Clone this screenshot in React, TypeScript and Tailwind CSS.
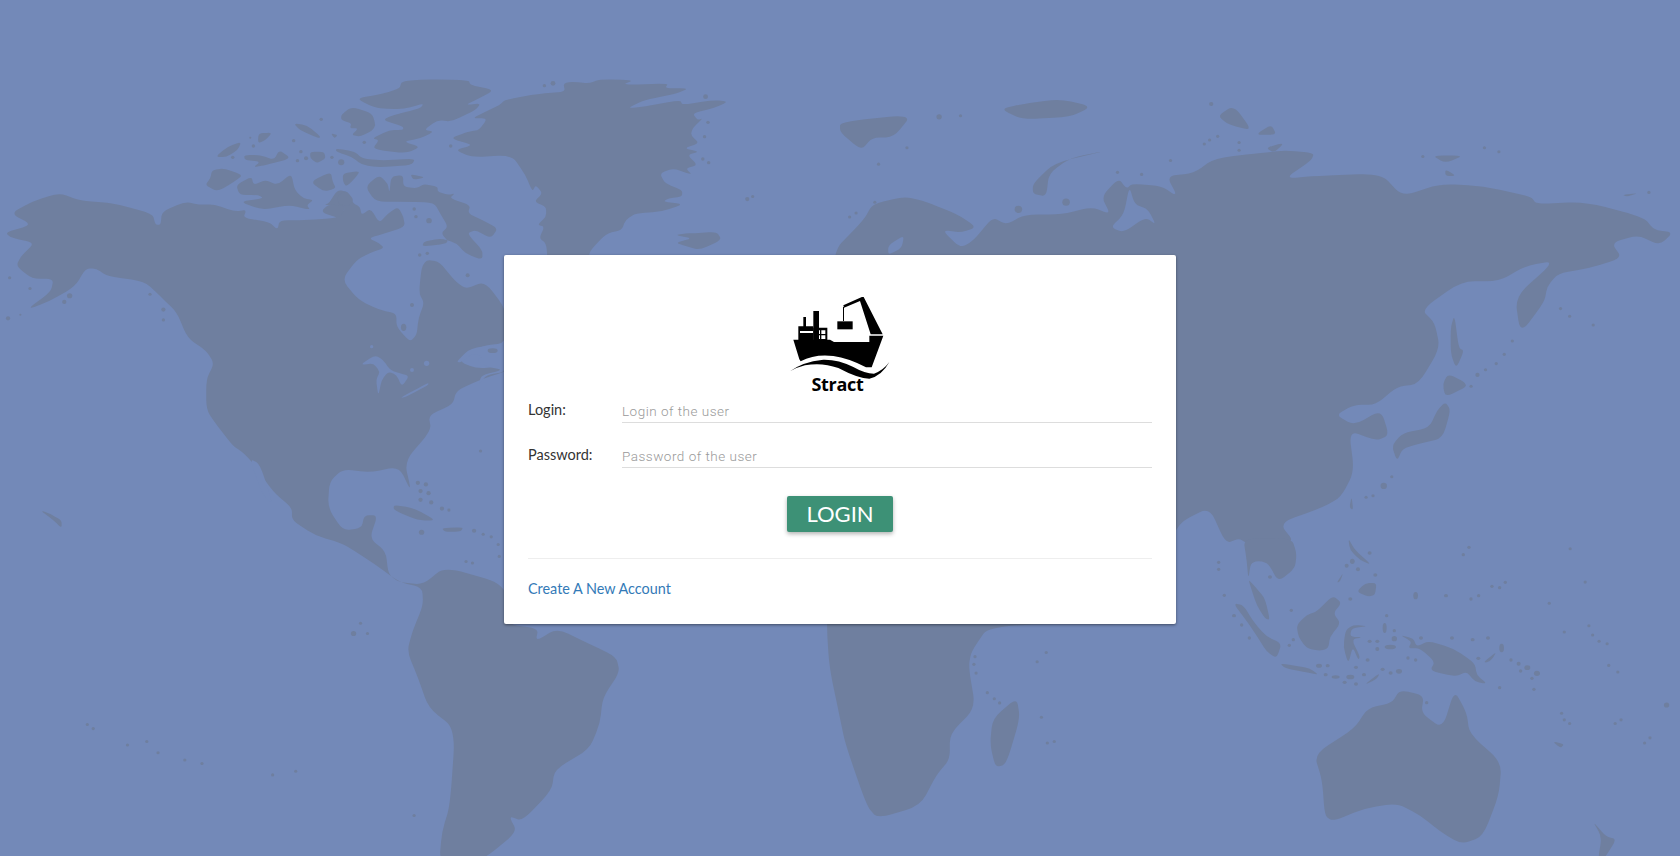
import React from 'react';

// rounds the corners of a traced outline
const smooth = (d: string) => {
  const n = (d.match(/-?\d+(\.\d+)?/g) || []).map(Number);
  const p: [number, number][] = [];
  for (let i = 0; i < n.length; i += 2) p.push([n[i], n[i + 1]]);
  const t = 0.35;
  let out = '';
  p.forEach((c, i) => {
    const a = p[(i - 1 + p.length) % p.length];
    const b = p[(i + 1) % p.length];
    const s = [c[0] + (a[0] - c[0]) * t, c[1] + (a[1] - c[1]) * t];
    const e = [c[0] + (b[0] - c[0]) * t, c[1] + (b[1] - c[1]) * t];
    out += `${i === 0 ? 'M' : 'L'}${s[0]} ${s[1]} Q${c[0]} ${c[1]} ${e[0]} ${e[1]} `;
  });
  return out + 'Z';
};

const LAND = '#6f7f9f';
const SEA = '#7389b8';

const northAmerica =
  'M20 318 L60 295 L110 278 L150 293 L210 298 L285 318 L290 340 L300 340 L302 315 L345 295 L373 301 L399 300 L438 314 L460 311 L454 327 L502 334 L518 350 L522 331 L566 331 L630 327 L647 305 L605 301 L614 298 L630 272 L650 276 L659 298 L672 305 L675 321 L692 308 L708 337 L724 318 L743 305 L753 324 L756 344 L717 357 L688 366 L708 376 L717 385 L690 395 L666 408 L638 447 L669 486 L709 506 L740 512 L740 538 L765 568 L778 554 L781 522 L792 492 L782 473 L787 422 L797 408 L820 412 L850 450 L870 465 L905 450 L945 505 L945 570 L900 575 L855 605 L890 620 L945 615 L945 625 L900 640 L852 662 L845 690 L800 710 L805 740 L755 800 L768 860 L745 810 L690 822 L640 815 L615 840 L612 890 L640 935 L675 930 L680 905 L705 905 L690 950 L720 975 L725 1020 L745 1035 L790 1040 L830 1005 L945 1040 L945 1117 L1005 1125 L1000 1150 L1040 1125 L1100 1155 L1150 1180 L1157 1210 L1125 1260 L1120 1310 L1100 1360 L1035 1400 L1030 1440 L975 1500 L950 1490 L965 1520 L920 1560 L890 1580 L820 1580 L825 1520 L840 1470 L850 1320 L800 1280 L780 1220 L760 1170 L770 1130 L790 1080 L788 1045 L745 1035 L700 1000 L640 960 L590 945 L545 915 L545 890 L510 860 L470 800 L450 780 L435 770 L405 730 L385 700 L385 640 L400 610 L385 585 L350 560 L330 510 L300 480 L270 450 L200 440 L180 425 L160 425 L140 460 L90 490 L50 505 L95 470 L100 445 L60 445 L30 420 L40 400 L65 375 L20 365 L10 355 L60 340 Z';
const leftIslands = [
  'M735 885 L770 890 L815 915 L780 915 L735 895 Z',
  'M825 930 L865 928 L860 937 L830 937 Z',
  'M75 895 L95 903 L115 915 L115 930 L100 915 Z',
];
const leftDots: [number, number, number][] = [
  [780, 842, 4], [795, 845, 4], [785, 858, 4], [800, 862, 4], [785, 875, 4], [805, 880, 4], [825, 892, 4], [838, 895, 3],
  [885, 935, 4], [902, 942, 3], [917, 947, 3], [930, 962, 3], [932, 985, 3], [870, 995, 3], [882, 998, 3], [787, 938, 5],
  [660, 1135, 5], [673, 1115, 3], [686, 1135, 3], [163, 1312, 3], [174, 1320, 3], [238, 1352, 3], [274, 1345, 3],
  [295, 1367, 3], [345, 1381, 3], [377, 1388, 3], [509, 1410, 3], [552, 1403, 3], [773, 1489, 3], [897, 780, 3],
  [15, 522, 4], [38, 515, 2], [18, 443, 3], [56, 464, 3], [120, 490, 4], [130, 478, 5], [280, 475, 3], [305, 505, 4], [305, 525, 3],
  [1395, 290, 4], [1405, 285, 3],
];

// arctic Canada and Greenland, traced from a closer look
const greenland =
  'M790 145 L830 125 L870 105 L885 90 L960 75 L1000 70 L1060 65 L1055 40 L1080 35 L1130 40 L1160 28 L1260 30 L1225 45 L1360 40 L1350 55 L1420 55 L1380 72 L1290 90 L1240 115 L1290 110 L1395 90 L1400 105 L1490 90 L1535 95 L1490 115 L1430 130 L1445 150 L1460 145 L1430 175 L1425 195 L1450 220 L1405 235 L1450 245 L1415 255 L1445 285 L1410 295 L1430 315 L1375 295 L1335 310 L1350 340 L1400 360 L1400 380 L1360 385 L1345 395 L1405 402 L1340 425 L1265 430 L1235 450 L1225 480 L1180 490 L1130 545 L1130 575 L1010 575 L1005 520 L985 505 L1000 470 L980 465 L1005 440 L1005 410 L970 395 L995 370 L975 345 L965 365 L945 315 L905 255 L790 262 L740 240 L795 225 L725 205 L780 185 L810 180 L835 145 Z';
const arctic = [
  'M455 85 L530 72 L580 55 L585 35 L640 28 L780 30 L785 45 L855 60 L810 85 L770 105 L815 100 L800 120 L730 155 L690 150 L650 180 L680 185 L640 205 L590 215 L640 230 L600 250 L500 238 L520 210 L500 205 L550 180 L590 180 L590 170 L530 150 L560 135 L640 115 L650 100 L590 118 L520 115 L490 105 Z',
  'M410 135 L440 110 L500 130 L510 165 L500 182 L465 200 L440 195 L460 175 L435 175 L440 160 L410 150 Z',
  'M395 235 L450 245 L470 265 L530 272 L625 265 L615 285 L520 292 L470 285 L440 260 L395 245 Z',
  'M272 160 L310 165 L350 200 L345 205 L290 180 Z',
  'M170 190 L210 188 L190 210 L168 220 Z',
  'M45 260 L80 230 L120 215 L110 240 L75 262 Z',
  'M128 255 L175 255 L215 270 L230 240 L265 265 L190 285 L155 292 L175 275 L130 270 Z',
  'M320 245 L360 245 L365 265 L340 280 L320 265 Z',
  'M380 190 L400 195 L390 205 Z',
  'M15 345 L30 325 L35 300 L70 295 L125 315 L100 335 L50 365 Z',
  'M105 345 L150 320 L155 345 L190 330 L225 345 L265 310 L275 360 L300 385 L330 390 L310 405 L320 420 L260 405 L180 420 L115 395 L185 385 L170 375 L115 375 Z',
  'M320 335 L380 305 L385 335 L395 355 L360 365 Z',
  'M415 310 L465 303 L450 325 L425 350 L415 335 Z',
  'M400 375 L425 362 L447 390 L430 410 L400 400 Z',
  'M355 420 L375 403 L425 408 L405 445 L360 430 Z',
  'M610 312 L655 322 L620 330 Z',
  'M480 350 L520 315 L545 340 L550 370 L555 320 L590 315 L590 350 L630 355 L650 342 L690 350 L690 365 L720 375 L740 370 L725 385 L785 405 L778 430 L820 450 L865 475 L845 505 L800 480 L775 490 L820 540 L820 570 L770 550 L745 520 L700 505 L650 515 L645 530 L725 520 L700 490 L720 470 L700 435 L680 398 L600 395 L510 395 Z',
  'M1380 495 L1410 490 L1435 490 L1500 485 L1515 510 L1450 540 L1415 530 L1380 518 L1430 505 Z',
];
const arcticDots: [number, number, number][] = [
  [1000, 47, 5], [1025, 40, 7], [1468, 80, 7], [1475, 157, 5], [1465, 200, 5], [1460, 267, 5], [1477, 278, 5], [728, 228, 5],
  [352, 148, 5], [146, 203, 3], [155, 228, 5], [272, 212, 5], [95, 262, 5], [293, 245, 5], [308, 265, 6], [283, 272, 5],
  [383, 262, 5], [410, 277, 9], [477, 217, 5], [622, 417, 5], [627, 440, 5], [665, 452, 8], [638, 555, 5], [660, 550, 5],
];

const eurasia =
  'M-20 399 L45 330 L60 300 L120 285 L160 295 L220 320 L255 345 L225 355 L190 350 L225 385 L250 370 L285 325 L310 340 L345 320 L415 320 L470 305 L505 320 L488 285 L520 250 L535 270 L545 260 L600 265 L630 285 L610 245 L660 240 L700 210 L790 200 L830 195 L885 200 L880 215 L830 250 L890 245 L1010 240 L1050 285 L1120 260 L1200 265 L1290 285 L1300 300 L1390 295 L1500 325 L1520 350 L1555 355 L1530 380 L1490 360 L1440 375 L1460 405 L1395 425 L1340 435 L1320 460 L1315 490 L1270 552 L1260 480 L1335 410 L1280 420 L1230 450 L1160 450 L1085 505 L1110 530 L1120 580 L1080 650 L1040 655 L1000 690 L960 690 L925 710 L960 730 L1010 700 L1025 750 L1000 760 L950 740 L960 820 L935 870 L900 890 L820 920 L850 960 L760 960 L745 950 L720 960 L690 890 L640 915 L620 945 L620 1117 L280 1117 L245 1170 L240 1200 L253 1280 L205 1330 L205 1380 L180 1410 L150 1470 L70 1495 L50 1470 L10 1350 L0 1300 L-20 1200 L-25 1117 L-20 800 Z';
const rightIslands = [
  'M330 1260 L336 1300 L310 1390 L290 1395 L280 1350 L285 1300 Z',
  'M885 1370 L960 1320 L985 1280 L1030 1270 L1045 1245 L1090 1255 L1085 1290 L1125 1320 L1147 1245 L1170 1290 L1175 1330 L1235 1385 L1230 1450 L1200 1530 L1160 1545 L1120 1520 L1085 1490 L1040 1465 L980 1475 L920 1500 L905 1490 L900 1420 Z',
  'M1405 1500 L1430 1530 L1450 1535 L1425 1575 L1415 1575 L1422 1530 Z',
  'M1130 685 L1140 700 L1125 755 L1085 765 L1050 775 L1040 800 L1030 770 L1050 745 L1100 735 L1115 700 Z',
  'M1125 650 L1135 630 L1165 645 L1170 655 L1130 675 Z',
  'M1147 515 L1155 580 L1165 585 L1150 620 L1140 590 L1140 540 Z',
  'M955 868 L958 895 L951 890 Z',
  'M360 260 L400 220 L500 195 L430 210 L390 240 L385 285 L360 280 Z',
  'M0 140 L135 125 L100 170 L60 170 L40 195 L0 160 Z',
  'M300 115 L340 105 L410 95 L470 110 L430 130 L340 135 Z',
  'M705 128 L735 108 L770 157 L725 145 Z',
  'M775 165 L805 145 L815 165 Z',
  'M795 190 L830 180 L810 200 Z',
  'M1105 205 L1165 205 L1130 220 Z',
  'M1130 232 L1150 245 L1130 245 Z',
  'M1460 282 L1490 278 L1470 285 Z',
  'M1330 1345 L1352 1350 L1345 1358 Z',
];
const rightDots: [number, number, number][] = [
  [1345, 503, 3], [1362, 518, 3], [1406, 535, 3], [1255, 566, 3], [1240, 592, 3], [1225, 610, 3], [1205, 622, 3], [1190, 632, 4], [1178, 654, 3],
  [1030, 830, 3], [1015, 848, 6], [995, 867, 3], [982, 870, 3], [1363, 970, 3], [1391, 1035, 3], [1324, 1076, 3], [1398, 1120, 3], [1352, 1132, 3],
  [1405, 1138, 3], [1417, 1150, 3], [1432, 1155, 3], [1435, 1197, 3], [1452, 1210, 3],
  [1347, 1290, 3], [1352, 1303, 3], [1362, 1310, 3], [1458, 1303, 3], [1447, 1310, 3], [1512, 1338, 3], [1502, 1348, 3], [1543, 1274, 5],
  [252, 1180, 3], [250, 1195, 3], [254, 1212, 3], [275, 1250, 3], [288, 1262, 3], [298, 1270, 3], [385, 1172, 3], [368, 1190, 3], [376, 1298, 3], [400, 1345, 3], [387, 1348, 3],
  [617, 215, 3], [72, 222, 3], [125, 190, 3], [185, 130, 5], [225, 128, 3],
  [1230, 198, 3], [1203, 190, 3], [1088, 207, 3], [690, 175, 3], [680, 183, 3], [705, 168, 3], [745, 180, 3], [745, 195, 3], [693, 105, 4],
  [65, 296, 3], [30, 317, 3], [18, 325, 3], [333, 310, 7], [422, 296, 7], [518, 238, 3], [563, 242, 3], [1510, 277, 3],
];

// south east Asia, traced from a closer look
const indonesia = [
  'M190 -5 L335 -5 L350 40 L345 85 L295 125 L265 70 L235 62 L212 70 L205 118 L200 60 Z',
  'M205 118 L225 140 L255 175 L270 240 L255 235 L230 195 L215 150 Z',
  'M160 190 L190 195 L220 245 L260 290 L305 310 L290 355 L260 335 L235 295 L205 250 Z',
  'M300 370 L350 378 L390 385 L417 405 L370 395 L315 385 Z',
  'M350 255 L380 225 L410 215 L458 167 L485 188 L460 220 L482 250 L450 290 L445 325 L420 333 L380 325 L355 290 Z',
  'M497 270 L520 255 L565 258 L515 265 L510 290 L550 292 L515 298 L540 350 L535 360 L518 320 L505 372 L490 320 Z',
  'M660 285 L700 295 L710 320 L745 303 L820 325 L885 370 L890 405 L922 432 L885 425 L860 395 L825 410 L750 392 L765 365 L720 325 L685 325 L695 305 Z',
  'M530 155 L555 130 L590 128 L585 165 L565 170 Z',
  'M470 128 L490 98 L480 125 Z',
  'M505 -5 L525 30 L575 75 L540 60 L510 30 Z',
  'M552 435 L600 398 L590 418 Z',
  'M912 365 L950 335 L935 360 L918 368 Z',
];
const indonesiaDots: [number, number, number, number][] = [
  [417, 377, 9, 6], [443, 377, 6, 5], [467, 411, 12, 5], [511, 411, 12, 7], [437, 404, 6, 5], [552, 404, 6, 5], [494, 427, 6, 5], [528, 432, 6, 5],
  [528, 382, 6, 5], [608, 388, 6, 5], [632, 399, 6, 5], [657, 394, 9, 7], [563, 360, 6, 5], [592, 327, 6, 6], [569, 304, 6, 5], [592, 304, 6, 5],
  [631, 321, 17, 7], [643, 296, 8, 8], [643, 272, 5, 5], [620, 227, 5, 5], [614, 264, 6, 15], [511, 177, 6, 5], [586, 105, 6, 5], [534, 88, 6, 6],
  [517, 64, 7, 8], [500, 77, 6, 6], [569, 39, 6, 5], [850, 44, 5, 5], [867, 22, 5, 5], [936, 139, 5, 5], [959, 143, 5, 5], [976, 127, 5, 5],
  [896, 167, 5, 5], [873, 177, 5, 5], [798, 167, 6, 5], [707, 167, 7, 11], [816, 294, 6, 5], [878, 299, 6, 5], [924, 294, 6, 5], [723, 294, 6, 5],
  [895, 355, 6, 5], [684, 354, 5, 5], [707, 360, 5, 5], [965, 324, 7, 13], [993, 360, 5, 5], [1016, 371, 6, 6], [1042, 383, 9, 7], [1071, 400, 9, 8],
  [1022, 393, 5, 5], [1056, 415, 5, 5], [1062, 448, 5, 5], [959, 443, 5, 5], [740, 488, 5, 5], [116, 67, 5, 5], [116, 88, 5, 5], [133, 166, 5, 5],
  [162, 227, 6, 5], [185, 255, 5, 5], [208, 294, 5, 5], [340, 299, 5, 5], [328, 316, 5, 5], [334, 211, 5, 5], [270, 111, 6, 5],
];

const WorldMap: React.FC = () => (
  <svg className="absolute inset-0 w-full h-full" viewBox="0 0 1680 856" fill={LAND}>
    <g transform="translate(0 50) scale(0.5357 0.5141)">
      <path d={smooth(northAmerica)} />
      {leftIslands.map((d) => <path key={d} d={smooth(d)} />)}
      {leftDots.map(([x, y, r]) => <circle key={`${x}-${y}`} cx={x} cy={y} r={r} />)}
      <path fill={SEA} d={smooth('M466 795 L485 805 L510 885 L490 865 Z')} />
    </g>
    <g transform="translate(200 70) scale(0.3444 0.3333)">
      <path d={smooth(greenland)} />
      {arctic.map((d) => <path key={d} d={smooth(d)} />)}
      {arcticDots.map(([x, y, r]) => <circle key={`${x}-${y}`} cx={x} cy={y} r={r} />)}
    </g>
    {/* great lakes and the gulf */}
    <g transform="translate(300 260) scale(0.3333)" fill={SEA}>
      <path d={smooth('M180 315 L225 285 L250 300 L270 330 L300 340 L328 348 L305 380 L290 345 L265 335 L245 360 L235 408 L228 360 L240 335 L220 310 Z')} />
      <path d={smooth('M298 415 L385 368 L385 375 L320 410 Z')} />
      <path d={smooth('M470 305 L510 265 L620 250 L620 335 L560 345 L535 375 L545 345 L610 330 L560 320 L530 300 L550 290 L520 280 L480 308 Z')} />
      <circle cx="380" cy="310" r="8" />
      <circle cx="336" cy="330" r="6" />
      <circle cx="215" cy="260" r="5" />
      <ellipse cx="311" cy="202" rx="8" ry="11" fill={LAND} />
      <circle cx="336" cy="135" r="6" fill={LAND} />
      <circle cx="503" cy="46" r="6" fill={LAND} />
      <ellipse cx="578" cy="272" rx="15" ry="7" fill={LAND} />
    </g>
    <g transform="translate(840 50) scale(0.5357 0.5141)">
      <path d={smooth(eurasia)} />
      {rightIslands.map((d) => <path key={d} d={smooth(d)} />)}
      {rightDots.map(([x, y, r]) => <circle key={`${x}-${y}`} cx={x} cy={y} r={r} />)}
      <path fill={SEA} d={smooth('M90 380 L120 360 L115 385 L90 399 Z')} />
      <path fill={SEA} d={smooth('M540 265 L550 300 L575 310 L590 340 L570 325 L530 355 L505 345 L530 320 Z')} />
    </g>
    <g transform="translate(1180 540) scale(0.3333)">
      {indonesia.map((d) => <path key={d} d={smooth(d)} />)}
      {indonesiaDots.map(([x, y, rx, ry]) => <ellipse key={`${x}-${y}`} cx={x} cy={y} rx={rx} ry={ry} />)}
    </g>
  </svg>
);

const ShipLogo: React.FC = () => (
  <svg className="w-[140px] h-[84px]" viewBox="0 35 420 252" fill="#000">
    <path d="M70 163 L180 163 L192 170 L298 170 L298 151 L340 151 L322 200 L305 246 L288 246 Q235 218 190 212 Q135 205 92 228 L88 222 Z" />
    <path d="M60 258 Q95 230 160 223 Q205 222 250 245 Q285 265 312 265 Q340 255 358 230 Q335 272 298 280 Q265 280 205 248 Q155 230 105 240 Q80 246 60 258 Z" />
    <rect x="130" y="77" width="17" height="88" />
    <rect x="100" y="95" width="8" height="30" />
    <path fillRule="evenodd" d="M85 123 H130 V165 H85 Z M90 137 V143 H130 V137 Z" />
    <path fillRule="evenodd" d="M130 127 H172 V165 H130 Z M140 135 V146 H150 V135 Z M154 135 V146 H166 V135 Z M140 150 V161 H150 V150 Z M154 150 V161 H166 V150 Z" />
    <path d="M220 60 L280 33 L338 147 L302 147 L270 47 L222 67 Z" />
    <rect x="219" y="65" width="3" height="42" />
    <rect x="202" y="108" width="46" height="24" />
  </svg>
);

const FormRow: React.FC<{ label: string; placeholder: string }> = ({ label, placeholder }) => (
  <div className="flex items-start h-[45px]">
    <label className="w-[94px] text-[14.5px] leading-5 text-[#333]">{label}</label>
    <input
      type="text"
      placeholder={placeholder}
      className="flex-1 h-[23px] border-b border-[#ddd] bg-transparent text-[13.5px] tracking-[0.5px] font-['Roboto',sans-serif] font-light outline-none placeholder:text-[#999]"
    />
  </div>
);

export default function App() {
  return (
    <div className="relative w-full h-[856px] overflow-hidden bg-[#7389b8] font-['Lato',sans-serif]">
      <WorldMap />
      <div className="relative flex justify-center pt-[255px]">
        <div className="w-[672px] h-[369px] bg-white rounded-[2px] shadow-[0_1px_3px_rgba(0,0,0,0.45)] px-6 pt-[42px]">
          <div className="flex flex-col items-center">
            <ShipLogo />
            <div className="text-[18px] leading-[20px] font-bold text-black font-['Open_Sans',sans-serif] -ml-[5px] -mt-[7px] tracking-[-0.3px]">Stract</div>
          </div>
          <div className="mt-[6px]">
            <FormRow label="Login:" placeholder="Login of the user" />
            <FormRow label="Password:" placeholder="Password of the user" />
          </div>
          <div className="flex justify-center mt-[6px]">
            <button className="w-[106px] h-[36px] rounded-[2px] bg-[#3d9176] text-white text-[22px] leading-none shadow-[0_2px_4px_rgba(0,0,0,0.3)]">
              LOGIN
            </button>
          </div>
          <div className="mt-[26px] border-t border-[#eee] pt-[20px]">
            <a href="#" className="block text-[14.4px] leading-5 text-[#337ab7]">Create A New Account</a>
          </div>
        </div>
      </div>
    </div>
  );
}
